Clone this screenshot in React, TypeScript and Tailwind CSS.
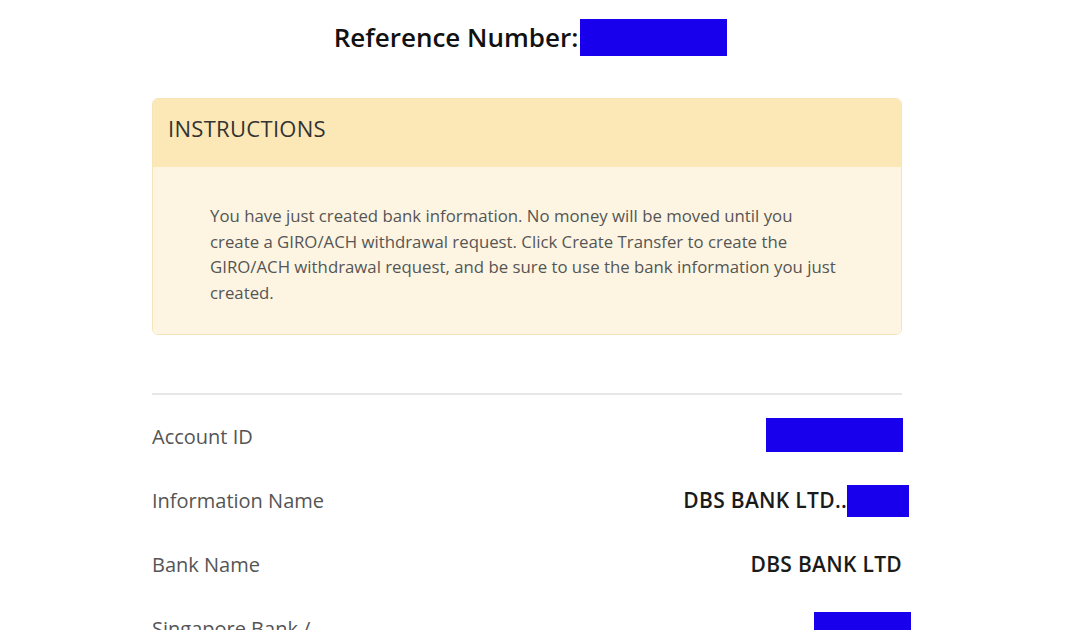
import React from 'react';

const Redacted: React.FC<{ className?: string }> = ({ className = '' }) => (
  <span className={`inline-block bg-[#1800ec] ${className}`} />
);

const rows: { label: string; value: React.ReactNode }[] = [
  { label: 'Account ID', value: <Redacted className="w-[137px] h-[34px] mr-[-1px] mt-[-4px]" /> },
  {
    label: 'Information Name',
    value: (
      <span className="flex items-center mr-[-7px]">
        DBS BANK LTD..
        <Redacted className="w-[62px] h-[32px]" />
      </span>
    ),
  },
  { label: 'Bank Name', value: <span>DBS BANK LTD</span> },
  { label: 'Singapore Bank /', value: <Redacted className="w-[97px] h-[34px] mr-[-9px]" /> },
];

const App: React.FC = () => {
  return (
    <div className="w-[1080px] h-[630px] overflow-hidden bg-white font-['Open_Sans','Liberation_Sans',sans-serif]">
      <div className="ml-[152px] w-[750px] flex flex-col">
        {/* Heading */}
        <div className="h-[98px] pt-[19px] flex justify-center">
          <div className="flex items-start ml-[7px]">
            <span className="text-[26px] leading-[37px] font-semibold text-[#111]">Reference Number:</span>
            <Redacted className="ml-[2px] w-[147px] h-[37px]" />
          </div>
        </div>

        {/* Instructions card */}
        <div className="rounded-[6px] border border-[#f6e4b8] overflow-hidden">
          <div className="h-[68px] bg-[#fce8b6] pl-[15px] pt-[14px]">
            <span className="text-[22px] leading-[30px] font-medium text-[#333] tracking-[0.3px]">INSTRUCTIONS</span>
          </div>
          <div className="bg-[#fdf5e2] pl-[57px] pr-[50px] pt-[36px] pb-[29px]">
            <p className="text-[16.8px] leading-[25.5px] text-[#555]">
              You have just created bank information. No money will be moved until you
              <br />
              create a GIRO/ACH withdrawal request. Click Create Transfer to create the
              <br />
              GIRO/ACH withdrawal request, and be sure to use the bank information you just
              <br />
              created.
            </p>
          </div>
        </div>

        {/* Divider */}
        <div className="mt-[58px] h-[2px] bg-[#e6e6e6]" />

        {/* Detail rows */}
        <div className="flex flex-col pt-[10px]">
          {rows.map((r) => (
            <div key={r.label} className="h-[64px] flex items-center justify-between">
              <span className="text-[20px] text-[#555]">{r.label}</span>
              <span className="text-[21px] font-semibold text-[#1a1a1a] tracking-[0.3px] flex items-center">
                {r.value}
              </span>
            </div>
          ))}
        </div>
      </div>
    </div>
  );
};

export default App;
